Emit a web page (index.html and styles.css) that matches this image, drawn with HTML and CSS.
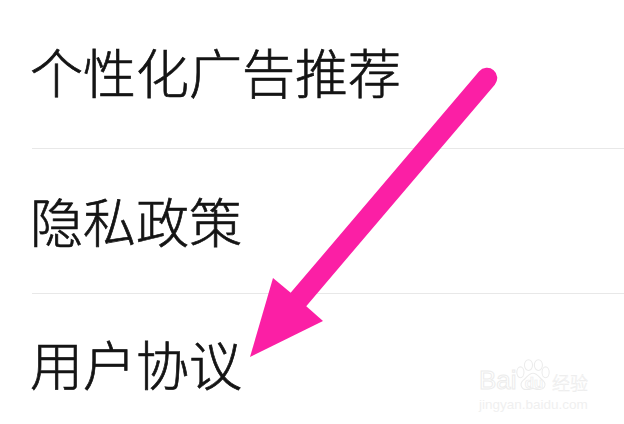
FILE: index.html
```html
<!DOCTYPE html>
<html lang="zh">
<head>
<meta charset="utf-8">
<title>设置</title>
<link rel="stylesheet" href="styles.css">
</head>
<body>
<ul class="menu">
  <li class="row row-first">个性化广告推荐</li>
  <li class="row row-middle">隐私政策</li>
  <li class="row row-last">用户协议</li>
</ul>
<svg class="arrow" viewBox="0 0 624 424" width="624" height="424" aria-hidden="true">
  <line x1="487" y1="78" x2="298" y2="300" stroke="#fb1fa5" stroke-width="20.5" stroke-linecap="round"/>
  <polygon points="250,357 273,278 291,293 306,306 323,321" fill="#fb1fa5"/>
</svg>
<div class="mark">
  <div class="logo">
    <span class="logo-word">Bai</span>
    <svg class="paw" viewBox="0 0 40 36" width="36" height="36" aria-hidden="true">
      <g fill="#fff" stroke="#ececec" stroke-width="1.2">
        <ellipse cx="6" cy="15" rx="4" ry="6"/>
        <ellipse cx="15" cy="7" rx="4.5" ry="6"/>
        <ellipse cx="26" cy="7" rx="4.5" ry="6"/>
        <ellipse cx="34" cy="15" rx="4" ry="6"/>
        <path d="M20 16c5 0 7 5 11 8 5 5 1 11-5 10-3 0-4-1-6-1s-3 1-6 1c-6 1-10-5-5-10 4-3 6-8 11-8z"/>
      </g>
    </svg>
    <span class="logo-du">du</span>
    <span class="logo-cn">经验</span>
  </div>
  <div class="url">jingyan.baidu.com</div>
</div>
</body>
</html>
```
FILE: styles.css
```css
html, body {
  margin: 0;
  padding: 0;
  width: 624px;
  height: 424px;
  overflow: hidden;
  background: #fff;
}
body {
  position: relative;
  font-family: "Noto Sans CJK SC", "Liberation Sans", sans-serif;
}
.menu {
  list-style: none;
  margin: 0;
  padding: 4px 0 0 32px;
}
.row {
  display: flex;
  align-items: center;
  height: 145px;
  box-sizing: border-box;
  border-bottom: 1px solid #e8e8e8;
  font-size: 53px;
  font-weight: 300;
  color: #141414;
  -webkit-text-stroke: 0.7px #141414;
  white-space: nowrap;
  text-indent: -2px;
}
.row-first {
  padding-bottom: 11px;
}
.row-middle {
  padding-bottom: 2px;
}
.row-last {
  border-bottom: 0;
  padding-bottom: 8px;
}
.arrow {
  position: absolute;
  left: 0;
  top: 0;
}
.mark {
  position: absolute;
  left: 479px;
  top: 357px;
  width: 112px;
  color: #fff;
}
.logo {
  display: flex;
  align-items: flex-end;
  height: 36px;
  position: relative;
}
.logo-word,
.logo-du {
  font-family: "Liberation Sans", sans-serif;
  font-size: 26px;
  line-height: 26px;
  color: #fff;
  -webkit-text-stroke: 1px #ececec;
}
.paw {
  position: absolute;
  left: 36px;
  top: 0;
}
.logo-word {
  width: 44px;
}
.logo-du {
  font-size: 15px;
  line-height: 20px;
  font-weight: 700;
  width: 22px;
  text-align: center;
  position: relative;
  -webkit-text-stroke: 0.7px #ececec;
}
.logo-cn {
  font-size: 18px;
  line-height: 22px;
  font-weight: 300;
  margin-left: 7px;
  color: #fff;
  -webkit-text-stroke: 0.5px #ececec;
}
.url {
  margin-top: 4px;
  font-family: "Liberation Sans", sans-serif;
  font-size: 13.5px;
  line-height: 16px;
  color: #f0f0f0;
  white-space: nowrap;
}
```
